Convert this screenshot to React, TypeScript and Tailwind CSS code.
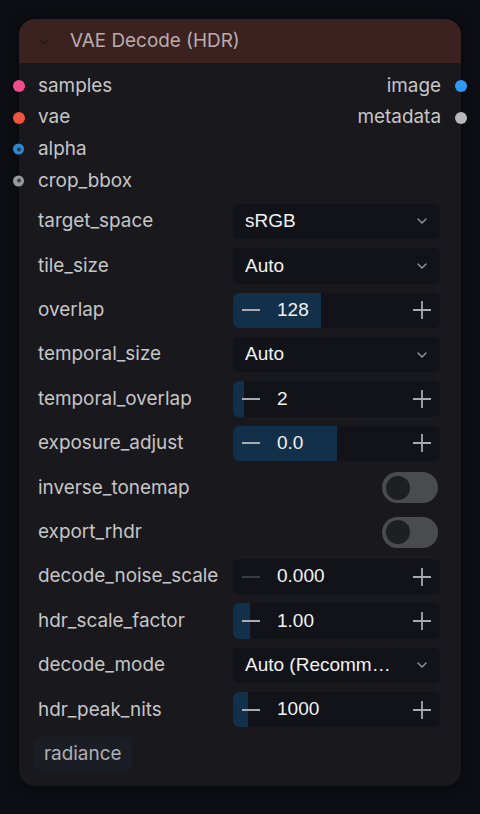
import React from "react";

type Widget =
  | { kind: "select"; name: string; value: string }
  | { kind: "number"; name: string; value: string; fill: number; atMin?: boolean }
  | { kind: "toggle"; name: string };

const widgets: Widget[] = [
  { kind: "select", name: "target_space", value: "sRGB" },
  { kind: "select", name: "tile_size", value: "Auto" },
  { kind: "number", name: "overlap", value: "128", fill: 88 },
  { kind: "select", name: "temporal_size", value: "Auto" },
  { kind: "number", name: "temporal_overlap", value: "2", fill: 11 },
  { kind: "number", name: "exposure_adjust", value: "0.0", fill: 104 },
  { kind: "toggle", name: "inverse_tonemap" },
  { kind: "toggle", name: "export_rhdr" },
  { kind: "number", name: "decode_noise_scale", value: "0.000", fill: 0, atMin: true },
  { kind: "number", name: "hdr_scale_factor", value: "1.00", fill: 17 },
  { kind: "select", name: "decode_mode", value: "Auto (Recomm…" },
  { kind: "number", name: "hdr_peak_nits", value: "1000", fill: 15 },
];

function Chevron({ className }: { className?: string }) {
  return (
    <svg viewBox="0 0 12 8" className={className} fill="none" stroke="currentColor" strokeWidth="1.3" strokeLinecap="round" strokeLinejoin="round">
      <path d="M2 2l4 4 4-4" />
    </svg>
  );
}

function Minus({ dim }: { dim?: boolean }) {
  return (
    <svg viewBox="0 0 20 20" className={`h-5 w-5 ${dim ? "text-[#3a3c42]" : "text-[#a9abb0]"}`} stroke="currentColor" strokeWidth="1.8">
      <path d="M1 10h18" />
    </svg>
  );
}

function Plus() {
  return (
    <svg viewBox="0 0 20 20" className="h-5 w-5 text-[#a9abb0]" stroke="currentColor" strokeWidth="1.8">
      <path d="M1 10h18M10 1v18" />
    </svg>
  );
}

function Slot({ side, color, hollow }: { side: "left" | "right"; color: string; hollow?: boolean }) {
  const pos = side === "left" ? "left-[-6px]" : "right-[-6px]";
  if (hollow) {
    return (
      <span
        className={`absolute ${pos} top-1/2 flex h-[11px] w-[11px] -translate-y-1/2 items-center justify-center rounded-full`}
        style={{ backgroundColor: color }}
      >
        <span className="h-[4px] w-[4px] rounded-full bg-[#1c2a3a] opacity-80" />
      </span>
    );
  }
  return (
    <span
      className={`absolute ${pos} top-1/2 h-[12px] w-[12px] -translate-y-1/2 rounded-full`}
      style={{ backgroundColor: color }}
    />
  );
}

// values render in an Arial-like face, labels in Inter
function Control({ w }: { w: Widget }) {
  if (w.kind === "toggle") {
    return (
      <div className="flex h-full w-[207px] items-center justify-end pr-[2px]">
        <div className="flex h-[31px] w-[56px] items-center rounded-full bg-[#4a4b4f] pl-[4px]">
          <div className="h-[24px] w-[24px] rounded-full bg-[#1e1f22]" />
        </div>
      </div>
    );
  }
  if (w.kind === "select") {
    return (
      <div className="flex h-full w-[207px] items-center justify-between rounded-md bg-[#111318] pl-[12px] pr-[12px]">
        <span className="truncate font-['Liberation_Sans',sans-serif] text-[19px] text-[#f2f2f2]">{w.value}</span>
        <Chevron className="h-[8px] w-[12px] shrink-0 text-[#9a9ca2]" />
      </div>
    );
  }
  return (
    <div className="relative flex h-full w-[207px] items-center overflow-hidden rounded-md bg-[#111318]">
      <div className="absolute inset-y-0 left-0 bg-[#13304a]" style={{ width: w.fill }} />
      <div className="relative flex w-full items-center pl-[8px] pr-[8px]">
        <Minus dim={w.atMin} />
        <span className="ml-[16px] font-['Liberation_Sans',sans-serif] text-[19px] text-[#f2f2f2]">{w.value}</span>
        <span className="ml-auto">
          <Plus />
        </span>
      </div>
    </div>
  );
}

export default function App() {
  return (
    <div className="min-h-[814px] bg-[#0c0e13] p-[19px] font-['Inter',sans-serif]">
      <div className="w-[442px] rounded-[16px] bg-[#19181c] shadow-[0_0_12px_rgba(0,0,0,0.5)]">
        <div className="flex h-[44px] items-center rounded-t-[16px] bg-[#3c2121] pl-[18px]">
          <Chevron className="h-[9px] w-[14px] text-[#26181a]" />
          <span className="ml-[19px] text-[18.9px] text-[#b9aeae]">VAE Decode (HDR)</span>
        </div>

        <div className="pt-[7px]">
          {[
            { l: "samples", lc: "#ee4f8c", r: "image", rc: "#2d9bf4" },
            { l: "vae", lc: "#ee553f", r: "metadata", rc: "#b7b7b9" },
            { l: "alpha", lc: "#2f87d0", hollow: true },
            { l: "crop_bbox", lc: "#9a9a9c", hollow: true },
          ].map((row) => (
            <div key={row.l} className="relative flex h-[31.7px] items-center justify-between pl-[19px] pr-[20px] text-[18.9px] text-[#c6c6c8]">
              <Slot side="left" color={row.lc} hollow={row.hollow} />
              <span>{row.l}</span>
              {row.r && <span>{row.r}</span>}
              {row.r && <Slot side="right" color={row.rc!} />}
            </div>
          ))}
        </div>

        <div className="mt-[7px] flex flex-col gap-[9px] pl-[19px] pr-[21px]">
          {widgets.map((w) => (
            <div key={w.name} className="flex h-[35.4px] items-center justify-between">
              <span className="text-[18.9px] text-[#c6c6c8]">{w.name}</span>
              <Control w={w} />
            </div>
          ))}
        </div>

        <div className="pb-[15px] pl-[14px] pt-[10px]">
          <span className="inline-flex h-[34px] items-center rounded-lg bg-[#1a1e24] px-[11px] text-[18.9px] text-[#aeb0b4]">
            radiance
          </span>
        </div>
      </div>
    </div>
  );
}
